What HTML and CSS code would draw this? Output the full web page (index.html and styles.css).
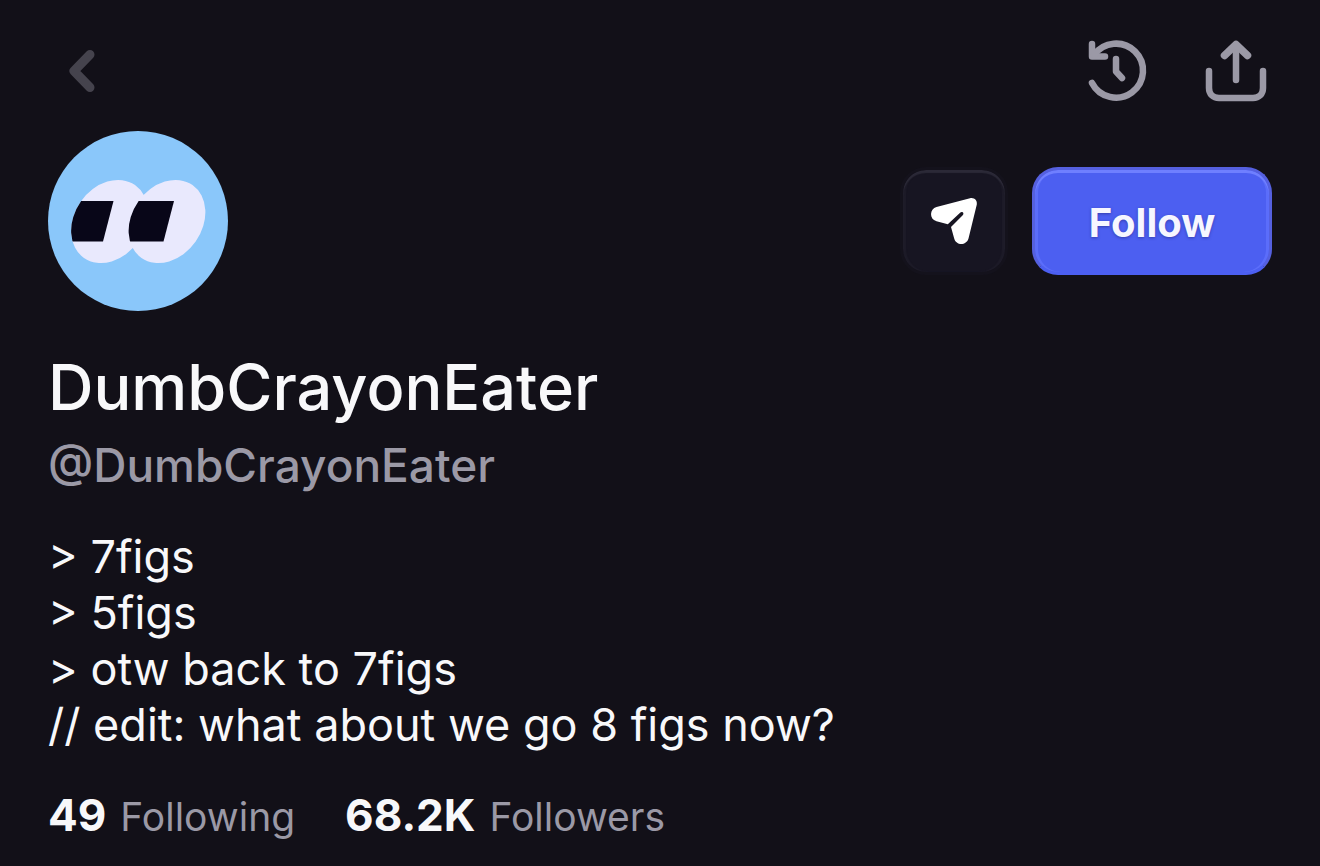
FILE: index.html
```html
<!DOCTYPE html>
<html lang="en">
<head>
    <meta charset="UTF-8">
    <meta name="viewport" content="width=device-width, initial-scale=1.0">
    <title>DumbCrayonEater</title>
    <link rel="stylesheet" href="styles.css">
</head>
<body>
    <header class="topbar">
        <button type="button" class="icon-btn back" aria-label="Back">
            <svg viewBox="0 0 72 72" fill="none" stroke="currentColor" stroke-width="9" stroke-linecap="round" stroke-linejoin="round">
                <path d="M42 19.500 26 36l16 16.500"/>
            </svg>
        </button>
        <div class="topbar-actions">
            <button type="button" class="icon-btn" aria-label="History">
                <svg viewBox="0 0 72 72" fill="none" stroke="currentColor" stroke-width="6.500" stroke-linecap="round" stroke-linejoin="round">
                    <path d="M12 9v12.500h13"/>
                    <path d="M14 20A27 27 0 1 1 12 48"/>
                    <path d="M36 24v12.500l6 6.500"/>
                </svg>
            </button>
            <button type="button" class="icon-btn" aria-label="Share">
                <svg viewBox="0 0 72 72" fill="none" stroke="currentColor" stroke-width="6.500" stroke-linecap="round" stroke-linejoin="round">
                    <path d="M36 45V10"/>
                    <path stroke-width="7.500" d="M24.500 20.500 36 9.500l11.500 11"/>
                    <path d="M9 36v17c0 6 4 10 10 10h34c6 0 10-4 10-10V36"/>
                </svg>
            </button>
        </div>
    </header>

    <main class="profile">
        <div class="profile-top">
            <svg class="avatar" viewBox="0 0 180 180" role="img" aria-label="DumbCrayonEater avatar">
                <defs>
                    <clipPath id="eyeLeft"><ellipse cx="61.500" cy="90.500" rx="35" ry="44.500" transform="rotate(35 61.500 90.500)"/></clipPath>
                    <clipPath id="eyeRight"><ellipse cx="119" cy="90.500" rx="35" ry="44.500" transform="rotate(35 119 90.500)"/></clipPath>
                </defs>
                <circle cx="90" cy="90" r="90" fill="#8ac7fa"/>
                <g fill="#e9e9fd">
                    <ellipse cx="61.500" cy="90.500" rx="35" ry="44.500" transform="rotate(35 61.500 90.500)"/>
                    <ellipse cx="119" cy="90.500" rx="35" ry="44.500" transform="rotate(35 119 90.500)"/>
                </g>
                <g fill="#080618">
                    <path clip-path="url(#eyeLeft)" d="M15 70h50.500L55 110.500H15z"/>
                    <path clip-path="url(#eyeRight)" d="M75 70h51L115.500 110.500H75z"/>
                </g>
            </svg>
            <div class="profile-actions">
                <button type="button" class="btn btn-send" aria-label="Send">
                    <svg viewBox="0 0 54 54">
                        <path fill="#fff" d="M9.500 13 43 4.200c4-1 7.500 2 6.800 6.200L41.500 44.500c-2 7.300-12.500 7.300-14.300 0L24 33l11.700-11.700c2-2.200-.6-4.400-2.600-2.600L20.800 30.300 9.500 27.300C2 25 2.500 15 9.500 13z"/>
                    </svg>
                </button>
                <button type="button" class="btn btn-follow">Follow</button>
            </div>
        </div>

        <h1 class="name">DumbCrayonEater</h1>
        <p class="handle">@DumbCrayonEater</p>
        <p class="bio">&gt; 7figs<br>&gt; 5figs<br>&gt; otw back to 7figs<br>// edit: what about we go 8 figs now?</p>

        <div class="stats">
            <a href="#following" class="stat"><strong>49</strong> <span>Following</span></a>
            <a href="#followers" class="stat"><strong>68.2K</strong> <span>Followers</span></a>
        </div>
    </main>
</body>
</html>
```

FILE: styles.css
```css
* {
    box-sizing: border-box;
}
body {
    margin: 0;
    padding: 35px 48px 0;
    background-color: #121018;
    color: #f8f8fa;
    font-family: Inter, "Liberation Sans", sans-serif;
}
button {
    padding: 0;
    border: 0;
    background: none;
    font-family: inherit;
    cursor: pointer;
}
.topbar,
.topbar-actions,
.profile-top,
.profile-actions,
.stats {
    display: flex;
}
.topbar,
.profile-top {
    justify-content: space-between;
    align-items: center;
}
.topbar {
    margin-bottom: 24px;
}
.topbar-actions {
    gap: 48px;
}
.icon-btn {
    width: 72px;
    height: 72px;
    color: #9b99a6;
}
.icon-btn svg {
    display: block;
}
.back {
    color: #45434d;
}
.avatar {
    width: 180px;
    height: 180px;
}
.profile-actions {
    gap: 24px;
}
.btn {
    display: flex;
    align-items: center;
    justify-content: center;
    height: 108px;
    border-radius: 26px;
}
.btn-send {
    width: 108px;
    background-color: #171522;
    border: 3px solid #14121c;
    box-shadow: inset 0 3px 1px #2b2937, inset 3px 0 1px #1d1b28, inset -3px 0 1px #1d1b28;
}
.btn-send svg {
    width: 54px;
    height: 54px;
}
.btn-follow {
    width: 240px;
    padding-top: 2px;
    background-color: #4c5ff1;
    border: 3px solid #5560df;
    border-bottom-color: #4c5ff1;
    box-shadow: inset 0 3px 0 #6f7fff, inset 3px 0 0 #5b6dfa, inset -3px 0 0 #5b6dfa;
    color: #f6f6ff;
    font-size: 40px;
    font-weight: 700;
    text-shadow: 0 1px 3px rgba(30, 30, 110, 0.5);
}
.name {
    margin: 40px 0 0;
    font-size: 63px;
    line-height: 72px;
    font-weight: 500;
}
.handle {
    margin: 14px 0 0;
    color: #9b99a6;
    font-size: 46px;
    line-height: 56px;
    font-weight: 500;
}
.bio {
    margin: 36px 0 0;
    font-size: 45px;
    line-height: 56px;
}
.stats {
    gap: 50px;
    margin-top: 34px;
}
.stat {
    display: flex;
    align-items: baseline;
    gap: 14px;
    color: #9b99a6;
    font-size: 39px;
    line-height: 56px;
    text-decoration: none;
}
.stat strong {
    color: #f8f8fa;
    font-size: 44px;
    font-weight: 700;
}
```
